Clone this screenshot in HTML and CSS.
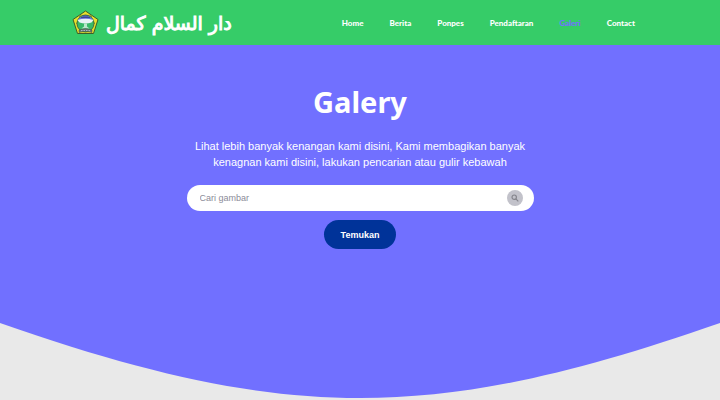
FILE: index.html
```html
<!DOCTYPE html>
<html lang="id">
<head>
<meta charset="utf-8">
<meta name="viewport" content="width=device-width, initial-scale=1">
<title>Galery</title>
<link rel="stylesheet" href="styles.css">
</head>
<body>
<header class="header">
  <a class="brand" href="#">
    <svg class="emblem" viewBox="0 0 54 50" aria-hidden="true">
      <path d="M27 2 52 19 43 47H11L2 19Z" fill="#e9df2c" stroke="#3c5f27" stroke-width="2" stroke-linejoin="round"/>
      <path d="M12 21 9 28M42 21l3 7M14 38l4 5M40 38l-4 5M19 10l-5 4M35 10l5 4" stroke="#8b8a28" stroke-width="2"/>
      <circle cx="27" cy="27" r="17" fill="#38b968" stroke="#42713a" stroke-width="2"/>
      <path d="M12 19Q27 4 42 19L39 24H15Z" fill="#6871dc"/>
      <path d="M11 20Q27 15 43 20L39 25Q27 29 15 25Z" fill="#e9f2f5"/>
      <path d="M18 15h18M21 12h12" stroke="#3e4792" stroke-width="2"/>
      <path d="M24 27h6v6l5 4H19l5-4Z" fill="#b9e7cb"/>
      <path d="M14 40q13-6 26 0v5q-13-5-26 0Z" fill="#66776f" stroke="#425446"/>
      <path d="M18 41h18" stroke="#a9b5c6" stroke-width="2" stroke-dasharray="3 2"/>
    </svg>
    <span class="wordmark" lang="ar" dir="rtl">دار السلام كمال</span>
  </a>
  <nav class="nav">
    <a href="#">Home</a>
    <a href="#">Berita</a>
    <a href="#">Ponpes</a>
    <a href="#">Pendaftaran</a>
    <a class="active" href="#" aria-current="page">Galeri</a>
    <a href="#">Contact</a>
  </nav>
</header>
<main>
  <section class="hero">
    <h1>Galery</h1>
    <p>Lihat lebih banyak kenangan kami disini, Kami membagikan banyak kenagnan kami disini, lakukan pencarian atau gulir kebawah</p>
    <form class="search">
      <div class="field">
        <input type="search" placeholder="Cari gambar" aria-label="Cari gambar">
        <button class="icon-button" type="button" aria-label="Cari">
          <svg viewBox="0 0 8 8" aria-hidden="true"><circle cx="3.2" cy="3.2" r="2.2"/><path d="M4.9 4.9 7.3 7.3"/></svg>
        </button>
      </div>
      <button class="submit" type="submit">Temukan</button>
    </form>
  </section>
  <svg class="curve" viewBox="0 0 720 75" preserveAspectRatio="none" aria-hidden="true"><path d="M0 0C286 100 434 100 720 0Z"/></svg>
</main>
</body>
</html>
```
FILE: styles.css
```css
* {
  box-sizing: border-box;
}

body {
  margin: 0;
  background: #e9e9e9;
  color: #fff;
  font-family: "Liberation Sans", Arial, sans-serif;
}

a {
  color: inherit;
  text-decoration: none;
}

button,
input {
  border: 0;
  font: inherit;
}

.header {
  display: flex;
  align-items: center;
  justify-content: space-between;
  height: 45px;
  padding: 0 10%;
  background: #36cc68;
}

.brand {
  display: flex;
  align-items: center;
  gap: 7px;
}

.emblem {
  width: 27px;
  height: 25px;
}

.wordmark {
  font: 19px/24px "DejaVu Sans", sans-serif;
  -webkit-text-stroke: 1px #fff;
  white-space: nowrap;
}

.nav {
  display: flex;
  font: 900 8px/12px Lato, sans-serif;
}

.nav a {
  padding: 0 13px;
}

.nav .active {
  color: #7170ff;
}

.hero {
  display: flex;
  flex-direction: column;
  align-items: center;
  min-height: 278px;
  padding: 36px 24px 24px;
  background: #7170ff;
  text-align: center;
}

h1 {
  margin: 0;
  font: 700 29px/42px "Noto Sans", sans-serif;
}

p {
  max-width: 346px;
  margin: 15px 0;
  font-size: 11px;
  line-height: 16px;
}

.search {
  display: flex;
  flex-direction: column;
  align-items: center;
  gap: 9px;
  width: 100%;
  max-width: 347px;
}

.field {
  display: flex;
  align-items: center;
  width: 100%;
  height: 26px;
  padding: 0 11px 0 13px;
  border-radius: 13px;
  background: #fff;
}

.field input {
  flex: 1;
  min-width: 0;
  padding: 0;
  background: none;
  color: #333;
  font-size: 9px;
  outline: 0;
  appearance: none;
}

.field input::placeholder {
  color: #8b8b98;
}

.icon-button {
  display: grid;
  place-items: center;
  width: 16px;
  height: 16px;
  padding: 0;
  border-radius: 50%;
  background: #c2c2ca;
}

.icon-button svg {
  width: 8px;
  height: 8px;
  fill: none;
  stroke: #85858c;
  stroke-width: 1.2;
}

.submit {
  width: 72px;
  height: 29px;
  padding: 0;
  border-radius: 15px;
  background: #003399;
  color: #fff;
  font-size: 9px;
  font-weight: 700;
}

.curve {
  display: block;
  width: 100%;
  height: 75px;
  fill: #7170ff;
}
```
